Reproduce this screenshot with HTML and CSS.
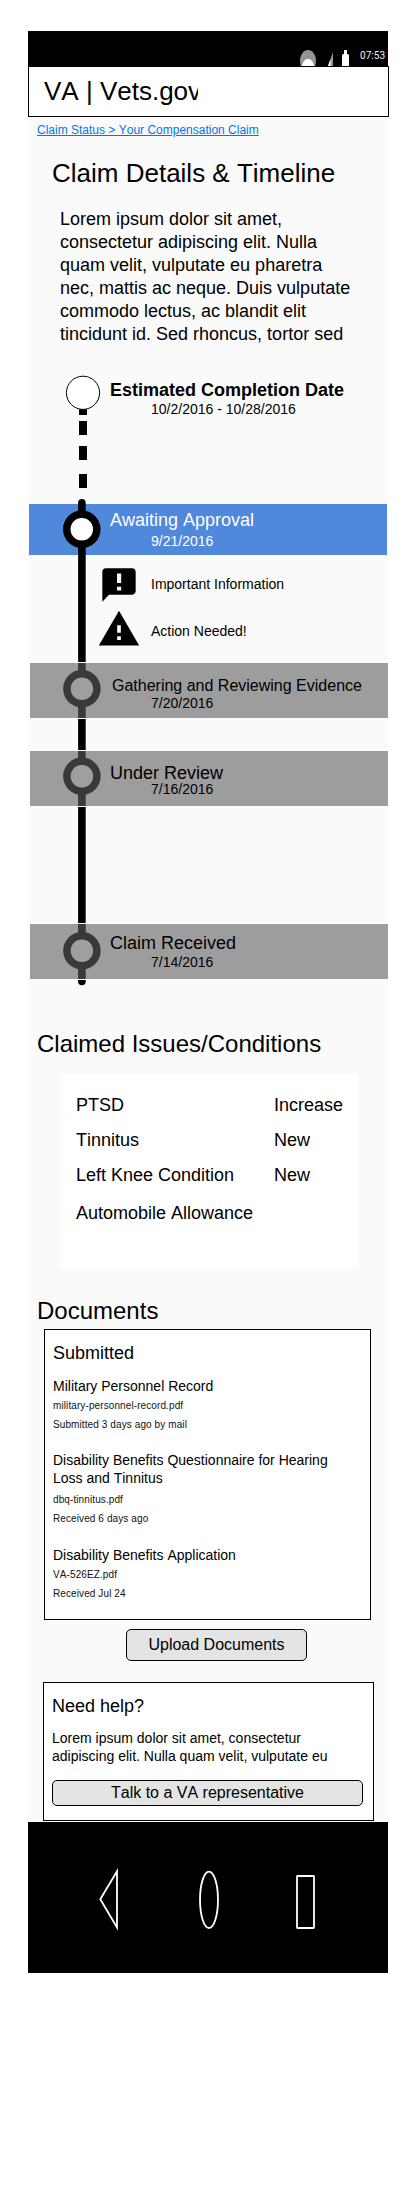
FILE: index.html
```html
<!DOCTYPE html>
<html lang="en">
<head>
<meta charset="utf-8">
<title>Claim Details &amp; Timeline</title>
<link rel="stylesheet" href="styles.css">
</head>
<body>
<div class="phone">
  <div class="status-bar">
    <svg class="status-icons" width="50" height="16" viewBox="0 0 50 16" aria-hidden="true">
      <path fill="#949494" d="M0.8 16Q0 13 0 10.500C0 5 3.500 0 8 0s8 5 8 10.500Q16 13 15.200 16z"/>
      <path fill="#fff" d="M1.800 16C3 11.500 5 9 8 9s5 2.500 6.200 7z"/>
      <path fill="#949494" d="M33 2v14h-5z"/>
      <path fill="#fff" d="M30.500 9v7h-2.500z"/>
      <path fill="#fff" d="M42 16V5.500Q42 4 43.500 4h.5V0h3v4h.5Q49 4 49 5.500V16z"/>
    </svg>
    <span class="clock">07:53</span>
  </div>
  <header class="site-header"><div class="brand">VA | Vets.gov</div></header>
  <main class="content">
    <a class="breadcrumb" href="#">Claim Status &gt; Your Compensation Claim</a>
    <h1 class="title">Claim Details &amp; Timeline</h1>
    <p class="intro">Lorem ipsum dolor sit amet, consectetur adipiscing elit. Nulla quam velit, vulputate eu pharetra nec, mattis ac neque. Duis vulputate commodo lectus, ac blandit elit tincidunt id. Sed rhoncus, tortor sed</p>

    <section class="timeline">
      <svg class="rail" width="80" height="644" viewBox="28 346 80 644" aria-hidden="true">
        <path d="M83 409v6M83 421v14M83 446v14M83 474v14" stroke="#000" stroke-width="8"/>
        <circle cx="83" cy="392.800" r="16.600" fill="#fff" stroke="#000"/>
        <path d="M81.900 502.800V981.400" stroke="#000" stroke-width="7.600" stroke-linecap="round"/>
        <g fill="#fff" stroke="#000" stroke-width="7.500">
          <circle cx="81.800" cy="529.300" r="15"/>
          <circle cx="81.900" cy="688.700" r="15"/>
          <circle cx="81.900" cy="776.300" r="15"/>
          <circle cx="81.900" cy="950.700" r="15"/>
        </g>
      </svg>
      <div class="step step-estimate"><h3 class="step-title bold">Estimated Completion Date</h3><p class="step-date">10/2/2016 - 10/28/2016</p></div>
      <div class="step step-current"><h3 class="step-title">Awaiting Approval</h3><p class="step-date">9/21/2016</p></div>
      <div class="notes">
        <div class="note note-info">
          <svg width="40" height="40" viewBox="0 0 24 24" aria-hidden="true"><path fill-rule="evenodd" d="M20 2H4c-1.100 0-2 .9-2 2v18l4-4.200h14c1.100 0 2-.9 2-2V4c0-1.100-.9-2-2-2zM10.800 5.100h2.500v5.700h-2.500zM10.800 13h2.500v2.300h-2.500z"/></svg>
          <span>Important Information</span>
        </div>
        <div class="note note-action">
          <svg width="44" height="44" viewBox="0 0 24 24" aria-hidden="true"><path fill-rule="evenodd" d="M1 21h22L12 2zM13 18h-2v-2h2zM13 14h-2v-4h2z"/></svg>
          <span>Action Needed!</span>
        </div>
      </div>
      <div class="step step-past step-gathering"><h3 class="step-title">Gathering and Reviewing Evidence</h3><p class="step-date">7/20/2016</p></div>
      <div class="step step-past step-review"><h3 class="step-title">Under Review</h3><p class="step-date">7/16/2016</p></div>
      <div class="step step-past step-received"><h3 class="step-title">Claim Received</h3><p class="step-date">7/14/2016</p></div>
    </section>

    <h2 class="section-title">Claimed Issues/Conditions</h2>
    <div class="issues">
      <div class="issue"><span>PTSD</span><span>Increase</span></div>
      <div class="issue"><span>Tinnitus</span><span>New</span></div>
      <div class="issue"><span>Left Knee Condition</span><span>New</span></div>
      <div class="issue"><span>Automobile Allowance</span></div>
    </div>

    <h2 class="section-title documents-title">Documents</h2>
    <section class="card documents">
      <h3 class="card-title">Submitted</h3>
      <article class="doc">
        <h4>Military Personnel Record</h4>
        <p>military-personnel-record.pdf</p>
        <p>Submitted 3 days ago by mail</p>
      </article>
      <article class="doc doc-long">
        <h4>Disability Benefits Questionnaire for Hearing Loss and Tinnitus</h4>
        <p>dbq-tinnitus.pdf</p>
        <p>Received 6 days ago</p>
      </article>
      <article class="doc">
        <h4>Disability Benefits Application</h4>
        <p>VA-526EZ.pdf</p>
        <p>Received Jul 24</p>
      </article>
    </section>
    <button class="button upload">Upload Documents</button>

    <section class="card help">
      <h3 class="card-title">Need help?</h3>
      <p class="help-text">Lorem ipsum dolor sit amet, consectetur adipiscing elit. Nulla quam velit, vulputate eu</p>
      <button class="button talk">Talk to a VA representative</button>
    </section>
  </main>
  <nav class="nav-bar">
    <svg width="360" height="151" viewBox="28 1822 360 151" fill="none" stroke="#fff" stroke-width="1.800" aria-hidden="true">
      <path d="M100.300 1899.300L117 1871.200V1927.500z"/>
      <ellipse cx="209" cy="1899.800" rx="9" ry="28.200"/>
      <rect x="297" y="1876" width="17" height="52" rx=".5"/>
    </svg>
  </nav>
</div>
</body>
</html>
```
FILE: styles.css
```css
* { box-sizing: border-box; }

body {
  margin: 0;
  min-height: 2187px;
  padding-top: 31px;
  background: #fff;
  color: #000;
  font-family: "Liberation Sans", Arial, sans-serif;
  font-size: 14px;
  line-height: 16px;
  font-kerning: none;
}

h1, h2, h3, h4, p { margin: 0; font-weight: normal; }

.phone { width: 360px; height: 1942px; margin-left: 28px; background: #fafafa; }

.status-bar {
  display: flex;
  height: 35px;
  padding: 19px 3px 0 272px;
  justify-content: space-between;
  background: #000;
}
.clock { color: #eee; font: 10px/12px Roboto, sans-serif; }

.site-header {
  width: 361px;
  height: 51px;
  padding: 9px 0 0 15px;
  border: 1px solid #000;
  background: #fff;
}
.brand {
  width: 154px;
  overflow: hidden;
  white-space: nowrap;
  font-size: 26px;
  line-height: 30px;
}

.content { height: 1705px; padding-top: 6px; }
.breadcrumb {
  display: block;
  margin-left: 9px;
  color: #0077ea;
  font-size: 12px;
  line-height: 14px;
}
.title { margin: 21px 0 0 24px; font-size: 26px; line-height: 30px; }
.intro { width: 300px; margin: 20px 0 0 32px; font-size: 18px; line-height: 23px; }

.timeline { position: relative; height: 634px; }
.rail { position: absolute; left: 0; top: 0; z-index: 1; }

.step { padding-left: 81px; }
.step-title { font-size: 18px; line-height: 20px; white-space: nowrap; }
.bold { font-weight: bold; }
.step-date { margin: 1px 0 0 42px; }
.step-estimate { height: 158px; padding: 34px 0 0 82px; }
.step-estimate .step-date { margin-left: 41px; }
.step-current {
  width: 358px;
  height: 51px;
  margin-left: 1px;
  padding-top: 6px;
  background: #5088dc;
  color: #fff;
}
.step-current .step-date { margin: 3px 0 0 41px; }

.notes { height: 107px; padding-top: 10px; }
.note { display: flex; align-items: center; }
.note-info { height: 40px; padding-left: 71px; gap: 12px; }
.note-info span { padding-bottom: 2px; }
.note-action { height: 44px; margin-top: 2px; padding-left: 69px; gap: 10px; }
.note-action span { padding-top: 4px; }

.step-past {
  position: relative;
  z-index: 2;
  width: 360px;
  height: 57px;
  margin-left: 1px;
  padding-left: 80px;
  border: 1px solid #fff;
  background: rgba(95, 95, 95, .6);
  background-clip: padding-box;
}
.step-gathering { padding-top: 14px; }
.step-gathering .step-title { margin-left: 2px; font-size: 16px; line-height: 17px; }
.step-past .step-date { margin-left: 41px; }
.step-review { margin-top: 31px; padding-top: 12px; }
.step-review .step-date { margin-top: -2px; }
.step-received { margin-top: 116px; padding-top: 9px; }

.section-title { margin: 50px 0 0 9px; font-size: 24px; line-height: 27px; }

.issues {
  display: flex;
  flex-direction: column;
  gap: 15px;
  width: 297px;
  height: 194px;
  margin: 17px 0 0 33px;
  padding: 21px 0 0 15px;
  background: #fff;
  font-size: 18px;
  line-height: 20px;
}
.issue { display: grid; grid-template-columns: 198px 1fr; }
.issue:last-child { margin-top: 3px; }

.documents-title { margin-top: 29px; }
.card { border: 1px solid #000; background: #fff; }
.card-title { font-size: 18px; line-height: 20px; }
.documents { width: 327px; height: 291px; margin: 5px 0 0 16px; padding: 13px 30px 0 8px; }
.doc { margin-top: 22px; }
.card-title + .doc { margin-top: 14px; }
.doc-long { margin-top: 21px; }
.doc h4 { margin-bottom: 5px; font-size: 14px; line-height: 18px; }
.doc-long h4 { margin-bottom: 7px; }
.doc p { color: #111; font-size: 10px; line-height: 11px; letter-spacing: .1px; }
.doc p + p { margin-top: 8px; }

.button {
  display: block;
  border: 1px solid #000;
  border-radius: 5px;
  background: #e4e4e4;
  color: #000;
  font: 16px/17px "Liberation Sans", Arial, sans-serif;
  font-kerning: none;
}
.upload { width: 181px; height: 32px; margin: 9px 0 0 98px; padding: 0 0 1px; }

.help { width: 331px; height: 139px; margin: 21px 0 0 15px; padding: 13px 10px 0 8px; }
.help-text { margin-top: 13px; font-size: 14px; line-height: 18px; }
.talk { width: 311px; height: 26px; margin-top: 15px; padding: 0 0 1px; }

.nav-bar { height: 151px; background: #000; }
.nav-bar svg { display: block; }
```
